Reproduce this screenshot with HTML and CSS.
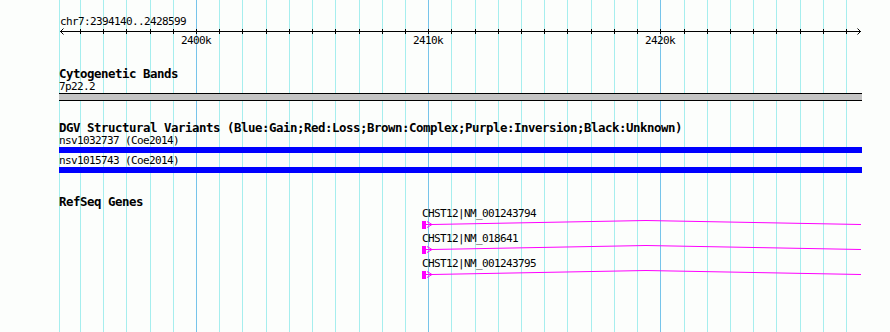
FILE: index.html
```html
<!DOCTYPE html>
<html lang="en">
<head>
    <meta charset="UTF-8">
    <meta name="viewport" content="width=device-width, initial-scale=1.0">
    <title>chr7:2394140..2428599</title>
    <link rel="stylesheet" href="styles.css">
</head>
<body>
    <div class="browser">
        <!-- 1kb grid behind all tracks -->
        <svg class="grid" width="890" height="332">
            <path class="grid-minor" d="M59.5 0V332M80.5 0V332M103.5 0V332M126.5 0V332M150.5 0V332M173.5 0V332M219.5 0V332M242.5 0V332M266.5 0V332M289.5 0V332M312.5 0V332M335.5 0V332M359.5 0V332M382.5 0V332M405.5 0V332M451.5 0V332M475.5 0V332M498.5 0V332M521.5 0V332M544.5 0V332M567.5 0V332M591.5 0V332M614.5 0V332M637.5 0V332M684.5 0V332M707.5 0V332M730.5 0V332M753.5 0V332M776.5 0V332M800.5 0V332M823.5 0V332M846.5 0V332"/>
            <path class="grid-major" d="M196.5 0V332M428.5 0V332M660.5 0V332"/>
        </svg>

        <div class="ruler">
            <div class="ruler-label">chr7:2394140..2428599</div>
            <svg class="axis" width="890" height="20">
                <path class="axis-line" d="M60 3.5H861"/>
                <path class="axis-ticks" d="M80.5 1V6M103.5 1V6M126.5 1V6M150.5 1V6M173.5 1V6M196.5 1V6M219.5 1V6M242.5 1V6M266.5 1V6M289.5 1V6M312.5 1V6M335.5 1V6M359.5 1V6M382.5 1V6M405.5 1V6M428.5 1V6M451.5 1V6M475.5 1V6M498.5 1V6M521.5 1V6M544.5 1V6M567.5 1V6M591.5 1V6M614.5 1V6M637.5 1V6M660.5 1V6M684.5 1V6M707.5 1V6M730.5 1V6M753.5 1V6M776.5 1V6M800.5 1V6M823.5 1V6M846.5 1V6"/>
                <path class="axis-arrow" d="M63.5 0.5L60.5 3.5L63.5 6.5M857.5 0.5L860.5 3.5L857.5 6.5"/>
                <text class="axis-text" x="196" y="15.5">2400k</text>
                <text class="axis-text" x="428" y="15.5">2410k</text>
                <text class="axis-text" x="660" y="15.5">2420k</text>
            </svg>
        </div>

        <section class="track track-cyto">
            <h2 class="track-title">Cytogenetic Bands</h2>
            <div class="feature-label">7p22.2</div>
            <div class="band"></div>
        </section>

        <section class="track track-dgv">
            <h2 class="track-title">DGV Structural Variants (Blue:Gain;Red:Loss;Brown:Complex;Purple:Inversion;Black:Unknown)</h2>
            <div class="variant">
                <div class="feature-label">nsv1032737 (Coe2014)</div>
                <div class="variant-bar gain"></div>
            </div>
            <div class="variant">
                <div class="feature-label">nsv1015743 (Coe2014)</div>
                <div class="variant-bar gain"></div>
            </div>
        </section>

        <section class="track track-genes">
            <h2 class="track-title">RefSeq Genes</h2>
            <div class="gene">
                <div class="feature-label">CHST12|NM_001243794</div>
                <svg class="gene-glyph" width="440" height="12">
                    <rect x="0" y="1" width="4" height="8"/>
                    <path d="M4 4.5H10M5 1.5L10 4.5L5 7.5"/>
                    <polyline points="10,4.5 224,0.5 439,4.5"/>
                </svg>
            </div>
            <div class="gene">
                <div class="feature-label">CHST12|NM_018641</div>
                <svg class="gene-glyph" width="440" height="12">
                    <rect x="0" y="1" width="4" height="8"/>
                    <path d="M4 4.5H10M5 1.5L10 4.5L5 7.5"/>
                    <polyline points="10,4.5 224,0.5 439,4.5"/>
                </svg>
            </div>
            <div class="gene">
                <div class="feature-label">CHST12|NM_001243795</div>
                <svg class="gene-glyph" width="440" height="12">
                    <rect x="0" y="1" width="4" height="8"/>
                    <path d="M4 4.5H10M5 1.5L10 4.5L5 7.5"/>
                    <polyline points="10,4.5 224,0.5 439,4.5"/>
                </svg>
            </div>
        </section>
    </div>
</body>
</html>
```

FILE: styles.css
```css
body {
    margin: 0;
    font-family: 'DejaVu Sans Mono', 'Liberation Mono', monospace;
    font-size: 11px;
    letter-spacing: -0.62px;
    color: #000;
    background: #fcfefc;
}

.browser {
    position: relative;
    width: 890px;
    height: 332px;
    overflow: hidden;
}

.grid {
    position: absolute;
    top: 0;
    left: 0;
    z-index: 0;
}

.grid path {
    fill: none;
    stroke-width: 1;
    shape-rendering: crispEdges;
}

.grid-minor {
    stroke: #a6eeee;
}

.grid-major {
    stroke: #76c4ea;
}

.ruler,
.track {
    position: relative;
    z-index: 1;
}

.ruler {
    padding-top: 15px;
}

.ruler-label {
    padding-left: 60px;
    line-height: 13px;
}

.axis {
    display: block;
}

.axis path {
    fill: none;
    stroke: #000;
    stroke-width: 1;
}

.axis-line,
.axis-ticks {
    shape-rendering: crispEdges;
}

.axis-text {
    font-family: 'DejaVu Sans Mono', 'Liberation Mono', monospace;
    font-size: 11px;
    letter-spacing: -0.62px;
    text-anchor: middle;
    fill: #000;
}

.track {
    padding-left: 59px;
}

.track-title {
    margin: 0;
    font-size: 12.4px;
    font-weight: bold;
    letter-spacing: -0.46px;
    line-height: 13px;
}

.feature-label {
    line-height: 13px;
    white-space: nowrap;
}

.track-cyto {
    margin-top: 19px;
}

.band {
    width: 803px;
    height: 6px;
    background: #c4c4c4;
    border-top: 1px solid #000;
    border-bottom: 1px solid #000;
}

.track-dgv {
    margin-top: 20px;
}

.variant {
    margin-bottom: 1px;
}

.variant-bar {
    width: 803px;
    height: 6px;
}

.variant-bar.gain {
    background: #0000ff;
}

.track-genes {
    margin-top: 23px;
}

.track-genes .track-title {
    line-height: 11px;
}

.gene {
    margin-left: 363px;
}

.gene-glyph {
    display: block;
}

.gene-glyph rect {
    fill: #ff00ff;
}

.gene-glyph path,
.gene-glyph polyline {
    fill: none;
    stroke: #ff00ff;
    stroke-width: 1;
}
```
